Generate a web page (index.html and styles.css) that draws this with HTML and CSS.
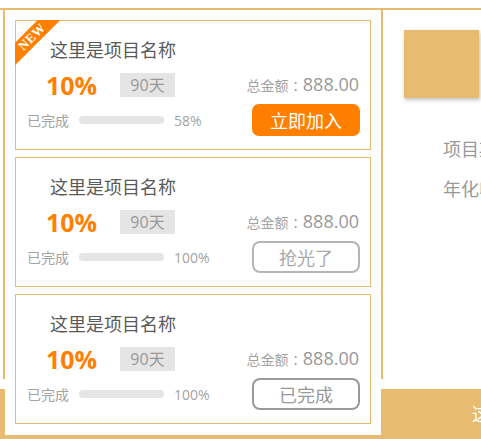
FILE: index.html
```html
<!DOCTYPE html>
<html lang="zh-CN">
<head>
<meta charset="utf-8">
<title>项目列表</title>
<link rel="stylesheet" href="styles.css">
</head>
<body>
<div class="frame">
  <div class="main">
    <div class="panel">
      <div class="list">
        <div class="card">
          <div class="ribbon-wrap"><div class="ribbon">NEW</div></div>
          <div class="title">这里是项目名称</div>
          <div class="row-info">
            <span class="rate">10%</span>
            <span class="days">90天</span>
            <span class="total"><span class="total-label">总金额<span class="colon">:</span></span><span class="total-num">888.00</span></span>
          </div>
          <div class="row-progress">
            <span class="p-label">已完成</span>
            <span class="bar"></span>
            <span class="p-val">58%</span>
            <span class="btn btn-join">立即加入</span>
          </div>
        </div>
        <div class="card">
          <div class="title">这里是项目名称</div>
          <div class="row-info">
            <span class="rate">10%</span>
            <span class="days">90天</span>
            <span class="total"><span class="total-label">总金额<span class="colon">:</span></span><span class="total-num">888.00</span></span>
          </div>
          <div class="row-progress">
            <span class="p-label">已完成</span>
            <span class="bar"></span>
            <span class="p-val">100%</span>
            <span class="btn btn-out">抢光了</span>
          </div>
        </div>
        <div class="card">
          <div class="title">这里是项目名称</div>
          <div class="row-info">
            <span class="rate">10%</span>
            <span class="days">90天</span>
            <span class="total"><span class="total-label">总金额<span class="colon">:</span></span><span class="total-num">888.00</span></span>
          </div>
          <div class="row-progress">
            <span class="p-label">已完成</span>
            <span class="bar"></span>
            <span class="p-val">100%</span>
            <span class="btn btn-done">已完成</span>
          </div>
        </div>
      </div>
    </div>
    <div class="side">
      <div class="side-img"></div>
      <div class="side-text">
        <div class="side-line">项目期限：90天</div>
        <div class="side-line">年化收益：10%</div>
      </div>
    </div>
  </div>
  <div class="bottom-bar">这里是项目详情</div>
</div>
</body>
</html>
```
FILE: styles.css
```css
html, body {
  margin: 0;
  padding: 0;
  width: 481px;
  height: 439px;
  overflow: hidden;
  background: #fff;
  font-family: "Open Sans", "Noto Sans CJK SC", sans-serif;
}

.frame {
  margin-top: 8px;
  border-top: 2px solid #e7bb70;
}

.main {
  display: flex;
  align-items: flex-start;
}

.panel {
  margin-left: 3px;
  width: 376px;
  height: 369px;
  flex: none;
  border-left: 2px solid #e7bb70;
  border-right: 2px solid #e7bb70;
}

.list {
  position: relative;
  z-index: 1;
  background: #fff;
  padding: 10px 10px 11px;
}

.card {
  position: relative;
  border: 1px solid #e7bb70;
  padding: 17px 0 13px;
  margin-bottom: 7px;
}

.card:last-child {
  margin-bottom: 0;
}

.ribbon-wrap {
  position: absolute;
  left: -1px;
  top: -1px;
  width: 52px;
  height: 52px;
  overflow: hidden;
}

.ribbon {
  position: absolute;
  left: -23px;
  top: 9px;
  width: 80px;
  height: 16px;
  background: #ff7f00;
  color: #fff;
  transform: rotate(-45deg);
  text-align: center;
  font-family: "Liberation Serif", serif;
  font-weight: bold;
  font-size: 13px;
  line-height: 16px;
  letter-spacing: 0.3px;
}

.title {
  padding-left: 34px;
  height: 24px;
  line-height: 24px;
  font-size: 18px;
  color: #5a5a5a;
}

.row-info {
  display: flex;
  align-items: center;
  height: 24px;
  margin-top: 11px;
}

.rate {
  width: 74px;
  margin-left: 30px;
  font-size: 25px;
  font-weight: bold;
  color: #ff7f00;
  line-height: 24px;
}

.days {
  width: 55px;
  height: 24px;
  line-height: 24px;
  text-align: center;
  background: #e5e5e5;
  color: #999;
  font-size: 16px;
}

.total {
  margin-left: auto;
  margin-right: 11px;
  color: #999;
  line-height: 24px;
  white-space: nowrap;
}

.total-label {
  font-size: 14px;
  color: #a3a3a3;
}

.colon {
  display: inline-block;
  padding: 0 5px;
  font-size: 16px;
  color: #999;
}

.total-num {
  font-size: 18px;
}

.row-progress {
  display: flex;
  align-items: center;
  height: 32px;
  margin-top: 7px;
}

.p-label {
  margin-left: 11px;
  font-size: 14px;
  color: #a3a3a3;
}

.bar {
  margin-left: 10px;
  width: 85px;
  height: 8px;
  border-radius: 4px;
  background: #e5e5e5;
}

.p-val {
  margin-left: 10px;
  font-size: 14px;
  color: #a3a3a3;
}

.btn {
  margin-left: auto;
  margin-right: 10px;
  box-sizing: border-box;
  width: 108px;
  height: 32px;
  border-radius: 7px;
  display: flex;
  align-items: center;
  justify-content: center;
  font-size: 18px;
}

.btn-join {
  background: #ff7f00;
  color: #fff;
}

.btn-out {
  border: 2px solid #b5b5b5;
  color: #aaa;
  border-radius: 8px;
}

.btn-done {
  border: 2px solid #999;
  color: #999;
  border-radius: 8px;
}

.side {
  flex: 1;
  min-width: 0;
  padding-top: 20px;
}

.side-img {
  margin-left: 21px;
  width: 75px;
  height: 68px;
  background: #e7bb70;
  box-shadow: 1px 2px 4px rgba(0, 0, 0, 0.25);
}

.side-text {
  margin-top: 31px;
  padding-left: 60px;
  white-space: nowrap;
}

.side-line {
  height: 40px;
  line-height: 40px;
  font-size: 18px;
  color: #999;
}

.bottom-bar {
  margin-top: 10px;
  height: 50px;
  line-height: 50px;
  background: #e7bb70;
  color: #fff;
  font-size: 18px;
  padding-left: 472px;
  white-space: nowrap;
  overflow: hidden;
}
```
